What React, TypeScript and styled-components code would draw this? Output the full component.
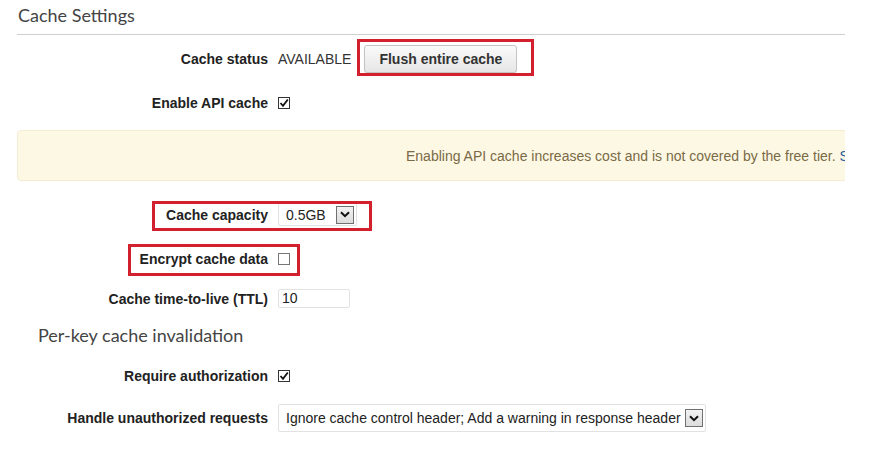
import React from "react";
import styled, { createGlobalStyle } from "styled-components";

const GlobalStyle = createGlobalStyle`
  html, body {
    margin: 0;
    padding: 0;
    background: #ffffff;
  }
  body {
    font-family: "Liberation Sans", Arial, sans-serif;
    color: #222;
  }
`;

const Page = styled.div`
  width: 845px;
  height: 455px;
  overflow: hidden;
  padding-left: 17px;
  box-sizing: border-box;
`;

const SectionTitle = styled.h2<{ $indent?: number }>`
  margin: 0;
  padding-left: ${(p) => p.$indent ?? 1}px;
  font-family: Lato, "Liberation Sans", sans-serif;
  font-weight: 400;
  font-size: 18px;
  line-height: 22px;
  color: #444;
`;

const TitleBar = styled.div`
  padding-top: 4px;
  padding-bottom: 8px;
  border-bottom: 1px solid #cfcfcf;
`;

const Form = styled.div`
  display: grid;
  grid-template-columns: 251px 1fr;
  column-gap: 10px;
  align-items: center;
`;

const Row = styled.div<{ $top: number }>`
  display: contents;
  & > * {
    margin-top: ${(p) => p.$top}px;
  }
`;

const Label = styled.label`
  justify-self: end;
  font-weight: 700;
  font-size: 14px;
  line-height: 16px;
  color: #222;
  white-space: nowrap;
`;

const Field = styled.div`
  display: flex;
  align-items: center;
  gap: 13px;
  font-size: 14px;
  line-height: 16px;
  color: #333;
`;

const Highlight = styled.div<{ $left: number; $right: number; $top: number; $bottom: number }>`
  position: relative;
  display: flex;
  &::after {
    content: "";
    position: absolute;
    left: ${(p) => p.$left}px;
    right: ${(p) => p.$right}px;
    top: ${(p) => p.$top}px;
    bottom: ${(p) => p.$bottom}px;
    border: 3px solid #d3202e;
    pointer-events: none;
  }
`;

const Button = styled.button`
  font-family: "Liberation Sans", Arial, sans-serif;
  font-weight: 700;
  font-size: 14px;
  color: #333;
  height: 28px;
  padding: 0 14px;
  border: 1px solid #c4c4c4;
  border-radius: 3px;
  background: linear-gradient(#fafafa, #e6e6e6);
  box-shadow: 0 1px 1px rgba(0, 0, 0, 0.08);
`;

const Box = styled.span<{ $checked?: boolean }>`
  display: inline-flex;
  align-items: center;
  justify-content: center;
  width: 12px;
  height: 12px;
  box-sizing: border-box;
  border: 1px solid ${(p) => (p.$checked ? "#333" : "#777")};
  background: #fff;
`;

const Alert = styled.div`
  margin-top: 19px;
  margin-right: -20px;
  height: 51px;
  box-sizing: border-box;
  padding-left: 388px;
  display: flex;
  align-items: center;
  background: #fdf8e4;
  border: 1px solid #f4edd3;
  border-radius: 4px;
  font-size: 14px;
  color: #7a6a45;
  white-space: nowrap;
  overflow: hidden;
`;

const AlertLink = styled.span`
  color: #2a5d9c;
  margin-left: 4px;
`;

const Select = styled.div<{ $width: number; $height: number }>`
  display: inline-flex;
  align-items: center;
  justify-content: space-between;
  width: ${(p) => p.$width}px;
  height: ${(p) => p.$height}px;
  box-sizing: border-box;
  padding: 0 2px 0 7px;
  border: 1px solid #e2e2e2;
  border-radius: 2px;
  background: #fff;
  font-size: 14px;
  color: #222;
  white-space: nowrap;
`;

const Arrow = styled.span`
  display: inline-flex;
  align-items: center;
  justify-content: center;
  width: 18px;
  height: 18px;
  box-sizing: border-box;
  border: 1px solid #707070;
  background: linear-gradient(#f2f2f2, #dcdcdc);
`;

const TextInput = styled.div`
  width: 72px;
  height: 19px;
  box-sizing: border-box;
  padding-left: 3px;
  border: 1px solid #e2e2e2;
  border-radius: 2px;
  font-size: 14px;
  line-height: 17px;
  color: #222;
`;

const SubTitle = styled.div`
  margin-top: 16px;
`;

const Check = ({ checked }: { checked?: boolean }) => (
  <Box $checked={checked}>
    {checked && (
      <svg width="10" height="10" viewBox="0 0 10 10">
        <path d="M1.5 5 L4 7.8 L8.8 1.5" fill="none" stroke="#111" strokeWidth="1.8" />
      </svg>
    )}
  </Box>
);

const Chevron = () => (
  <svg width="10" height="7" viewBox="0 0 10 7">
    <path d="M1 1.2 L5 5.2 L9 1.2" fill="none" stroke="#111" strokeWidth="2" />
  </svg>
);

const App: React.FC = () => (
  <>
    <GlobalStyle />
    <Page>
      <TitleBar>
        <SectionTitle>Cache Settings</SectionTitle>
      </TitleBar>
      <Form>
        <Row $top={10}>
          <Label>Cache status</Label>
          <Field>
            <span>AVAILABLE</span>
            <Highlight $left={-7} $right={-17} $top={-6} $bottom={-3}>
              <Button>Flush entire cache</Button>
            </Highlight>
          </Field>
        </Row>
        <Row $top={22}>
          <Label>Enable API cache</Label>
          <Field>
            <Check checked />
          </Field>
        </Row>
      </Form>
      <Alert>
        Enabling API cache increases cost and is not covered by the free tier.
        <AlertLink>See pricing</AlertLink>
      </Alert>
      <Form>
        <Row $top={22}>
          <Label>Cache capacity</Label>
          <Field>
            <Highlight $left={-126} $right={-15} $top={-2} $bottom={-5}>
              <Select $width={79} $height={23}>
                0.5GB
                <Arrow>
                  <Chevron />
                </Arrow>
              </Select>
            </Highlight>
          </Field>
        </Row>
        <Row $top={25}>
          <Label>Encrypt cache data</Label>
          <Field>
            <Highlight $left={-150} $right={-10} $top={-9} $bottom={-11}>
              <Check />
            </Highlight>
          </Field>
        </Row>
        <Row $top={22}>
          <Label>Cache time-to-live (TTL)</Label>
          <Field>
            <TextInput>10</TextInput>
          </Field>
        </Row>
      </Form>
      <SubTitle>
        <SectionTitle $indent={21}>Per-key cache invalidation</SectionTitle>
      </SubTitle>
      <Form>
        <Row $top={22}>
          <Label>Require authorization</Label>
          <Field>
            <Check checked />
          </Field>
        </Row>
        <Row $top={20}>
          <Label>Handle unauthorized requests</Label>
          <Field>
            <Select $width={428} $height={28}>
              Ignore cache control header; Add a warning in response header
              <Arrow>
                <Chevron />
              </Arrow>
            </Select>
          </Field>
        </Row>
      </Form>
    </Page>
  </>
);

export default App;
